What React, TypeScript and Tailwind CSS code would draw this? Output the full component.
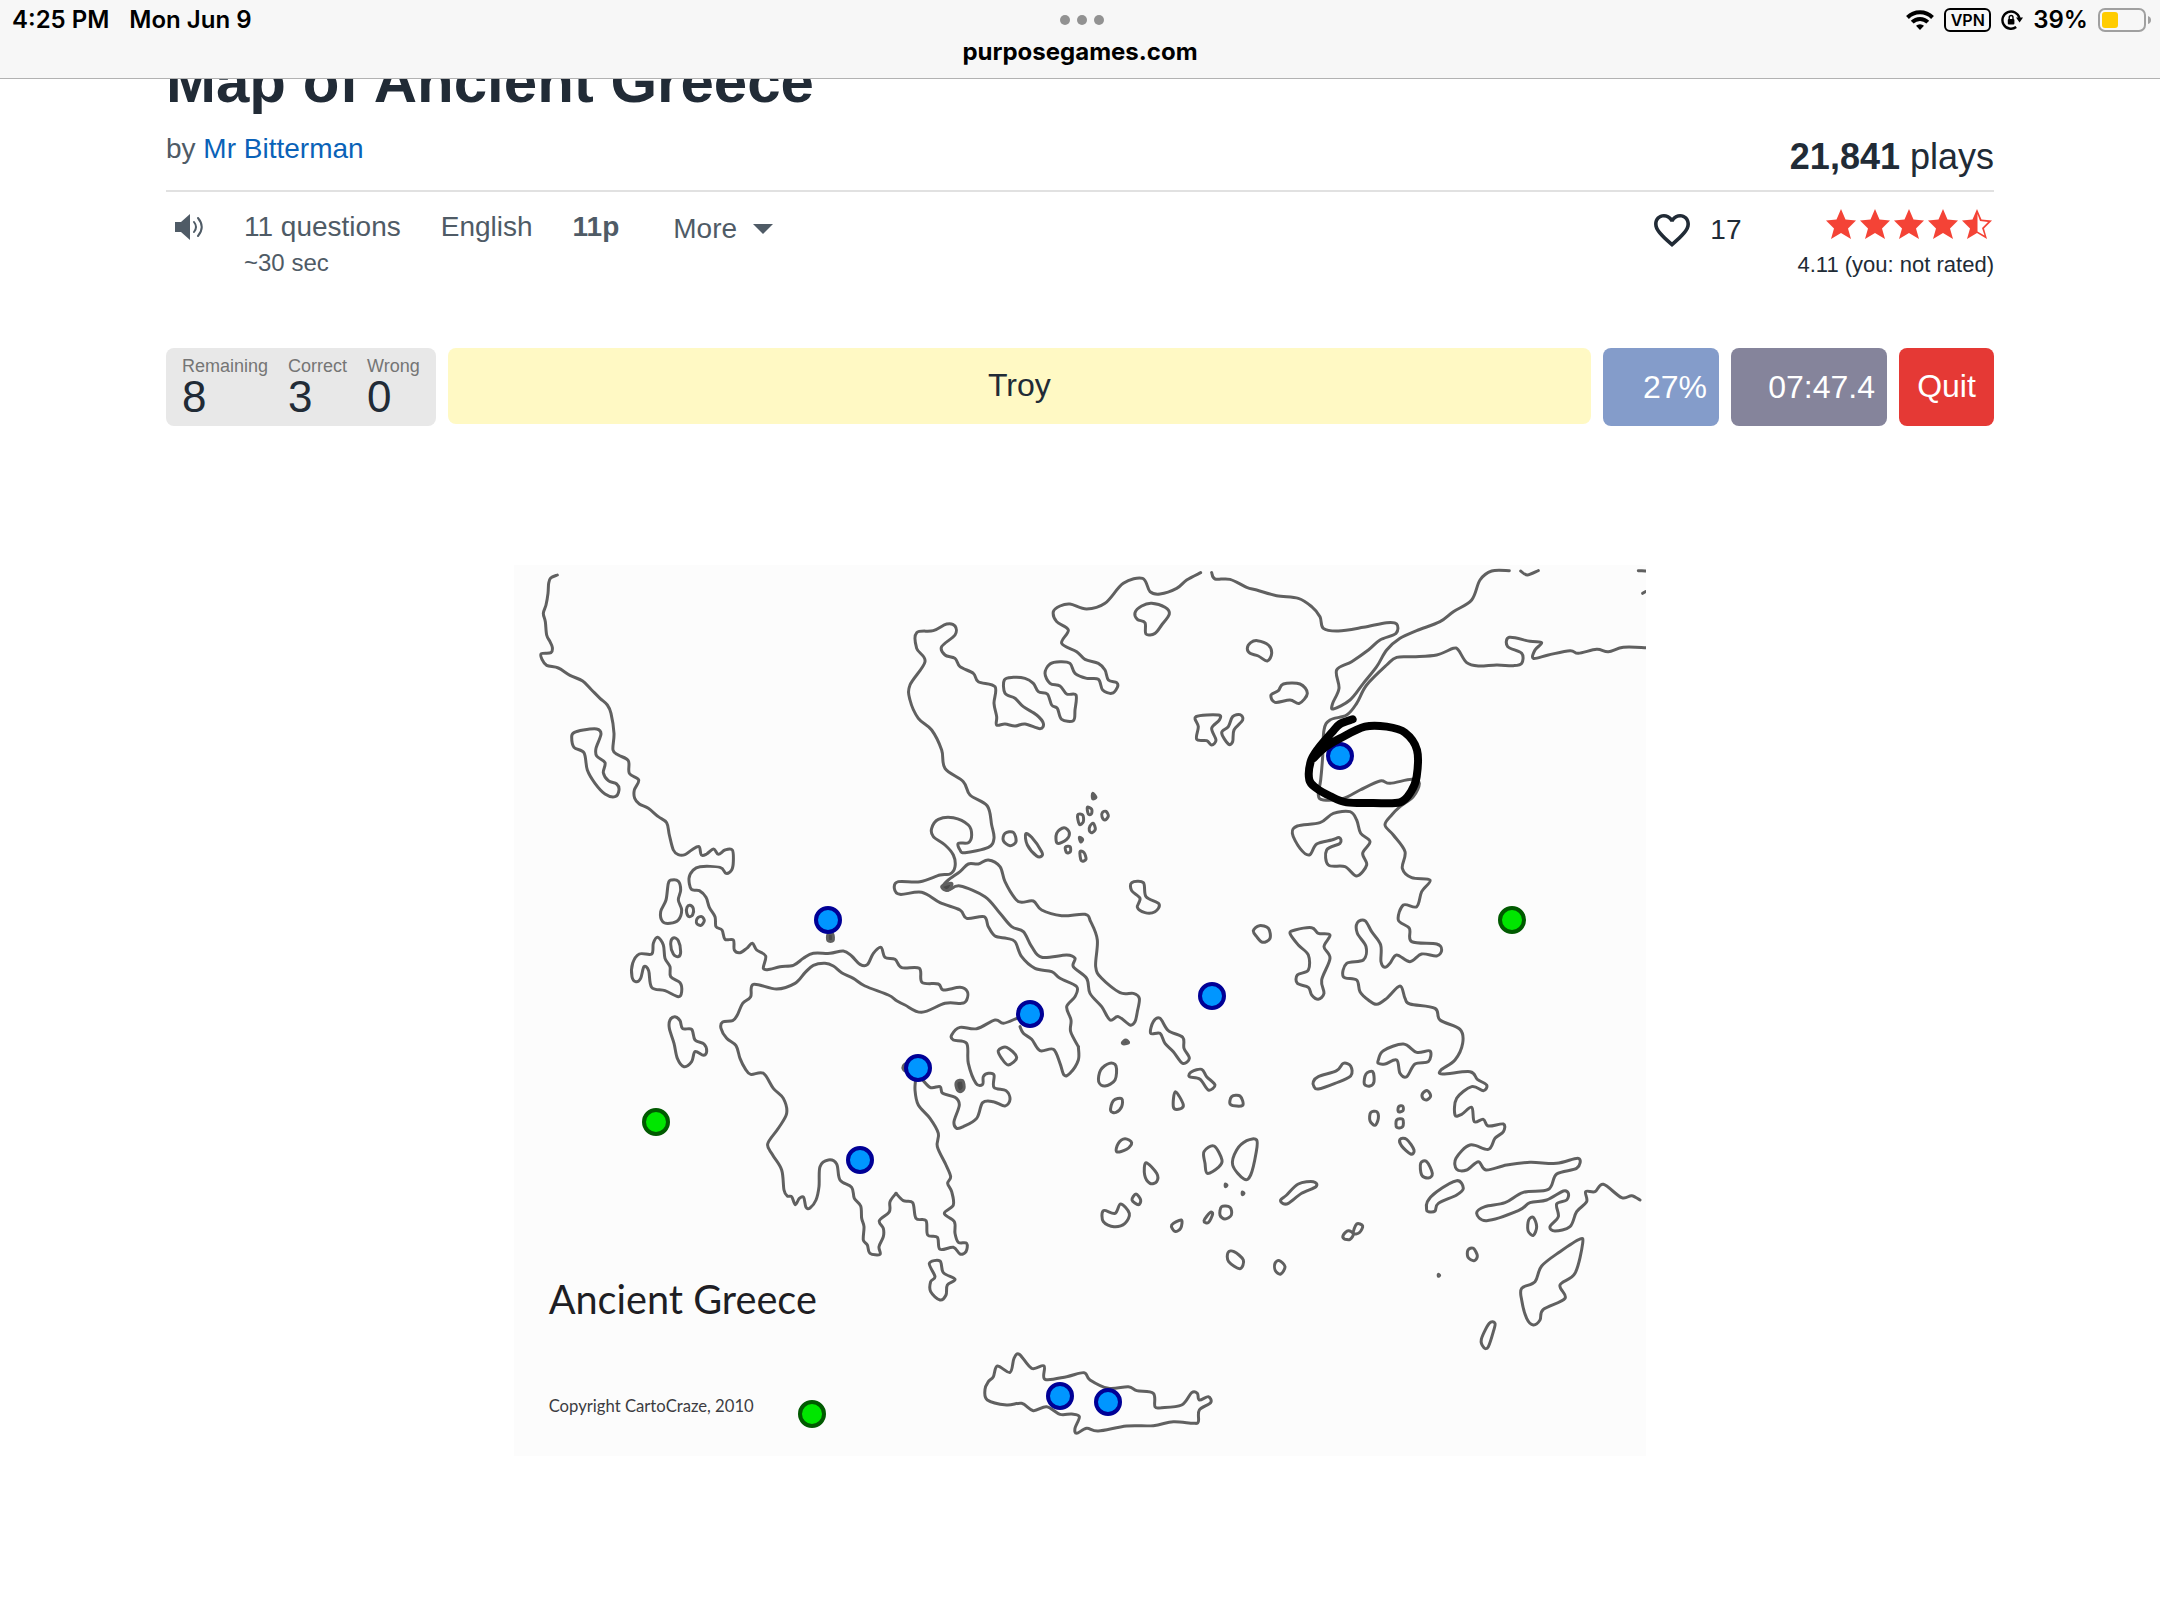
import React from 'react';

type Region = { x: number; y: number; open: string[]; closed: string[]; specks: string[] };

// Coastlines, grouped by region. Each region has its own origin on the 3396 x 2673 sheet.
const regions: Region[] = [
  {
    // Epirus and the Ionian islands
    x: -42,
    y: -45,
    open: [
      '172,75 152,84 146,100 144,130 138,165 130,190 136,215 140,255 150,275 157,292 153,308 124,311 126,328 140,346 175,354 210,376 248,393 275,420 300,445 322,465 333,490 342,550 339,600 355,615 385,632 388,670 416,690 403,720 404,745 418,762 445,775 475,800 500,818 508,855 520,900 535,914 555,914 575,900 597,890 604,915 620,912 641,897 655,913 675,900 697,900 700,935 695,960 678,970 660,952 600,950 578,962 567,985 574,1018 598,1022 618,1042 628,1072 645,1100 648,1130 666,1140 675,1168 700,1170 703,1200 720,1208 740,1195 757,1180 770,1200 797,1218 790,1255 810,1258 840,1250 880,1246 910,1225 940,1210 990,1210 1030,1203 1055,1218 1080,1243 1102,1244 1120,1210 1143,1192 1155,1222 1185,1228 1205,1253 1258,1255 1266,1297 1315,1302 1330,1320 1380,1312 1402,1325 1400,1350 1385,1360 1335,1360 1265,1387 1215,1365 1190,1352 1165,1335 1095,1308 1060,1285 1025,1268 1000,1248 975,1240 940,1246 915,1268 885,1300 830,1317 760,1303 752,1340 728,1360 712,1395 698,1412 668,1416 663,1435 680,1465 708,1487 720,1525 735,1555 752,1573 790,1570 820,1615 850,1645 860,1690 835,1735 803,1782 818,1815 845,1860 852,1920 862,1938 875,1940 886,1964 898,1945 911,1942 918,1972 930,1974 948,1950 957,1910 960,1850 985,1830 1010,1842 1020,1890 1055,1912 1063,1945 1082,1968 1085,2005 1092,2030 1090,2070 1102,2085 1110,2110 1140,2113 1137,2090 1150,2060 1150,2035 1138,2012 1168,1985 1170,1955 1188,1930',
    ],
    closed: [
      '215,560 222,548 250,540 290,537 303,552 288,595 290,618 315,638 310,668 325,692 350,702 357,720 345,740 315,732 285,700 262,660 252,608 222,592',
      '505,1000 515,990 535,994 542,1020 535,1050 545,1080 535,1110 510,1120 488,1115 482,1085 498,1050',
      '570,1066 580,1076 578,1094 567,1100 560,1088 561,1072',
      '592,1105 605,1100 613,1112 603,1126 590,1120',
      '520,1164 535,1172 542,1205 535,1220 520,1212 512,1182',
      '473,1162 490,1185 495,1225 510,1250 512,1280 540,1298 545,1325 535,1340 495,1322 455,1312 446,1262 432,1250 422,1285 408,1295 396,1280 398,1240 418,1212 455,1212 460,1180',
      '525,1400 540,1412 548,1436 575,1438 585,1470 612,1482 620,1505 610,1516 585,1505 575,1535 552,1550 532,1525 522,1480 508,1435 510,1410',
    ],
    specks: ['984,1152 998,1152 999,1172 984,1172'],
  },
  {
    // Macedonia, Thessaly and Euboea
    x: 1038,
    y: -45,
    open: [
      '655,1490 632,1445 633,1410 620,1370 645,1340 650,1310 600,1285 575,1265 525,1255 485,1220 465,1175 440,1165 405,1158 385,1130 372,1100 320,1105 300,1080 240,1058 185,1027 120,1033 103,1015 115,995 180,995 240,975 270,972 285,950 280,915 255,885 220,860 215,835 235,808 280,803 325,825 335,855 325,878 295,880 300,900 315,908 385,892 402,865 395,825 382,768 330,735 310,695 255,655 245,600 215,540 175,505 150,450 150,405 195,335 170,295 170,248 220,242 260,222 285,228 285,255 245,290 255,315 285,325 300,350 340,370 355,395 405,410 402,460 410,500 410,525 435,522 465,528 495,522 540,536 550,520 530,495 490,470 465,445 435,430 433,390 460,382 495,385 520,400 535,425 562,432 575,465 592,475 605,508 640,512 645,480 648,435 620,432 600,408 570,400 555,370 570,342 600,335 630,340 645,370 680,385 715,388 728,420 755,430 772,412 770,398 745,390 735,360 715,340 675,328 650,305 605,280 625,240 590,215 580,185 600,168 630,162 680,177 735,160 790,100 848,85 870,125 900,132 950,115 980,90 1022,68',
    ],
    closed: [
      '248,1010 265,990 300,965 325,942 355,942 385,930 420,950 435,995 465,1045 485,1057 520,1053 545,1080 605,1097 675,1093 692,1115 712,1170 707,1250 725,1285 780,1328 820,1330 838,1345 832,1385 825,1415 810,1425 775,1400 750,1410 725,1370 690,1330 680,1285 640,1250 645,1225 620,1215 545,1222 515,1190 490,1145 455,1130 420,1090 375,1040 300,1008 265,1020',
      '825,188 845,168 875,160 915,172 928,192 905,225 885,250 858,252 855,218 832,208',
      '1162,295 1172,278 1192,272 1225,285 1235,310 1222,333 1195,318 1170,310',
      '1008,500 1075,495 1078,510 1055,535 1068,570 1055,585 1040,572 1010,568 1015,530',
      '1140,494 1148,510 1122,540 1118,575 1105,582 1085,548 1105,530 1118,500',
      '435,850 460,847 468,875 450,887 430,872',
      '497,852 515,862 545,905 545,918 530,918 502,885',
      '590,850 612,833 628,848 620,868 592,880',
      '815,998 850,998 858,1040 897,1062 885,1085 855,1088 832,1072 840,1045 815,1022',
      '1180,1142 1198,1127 1225,1135 1230,1165 1208,1177 1190,1160',
      '653,795 668,795 670,815 658,823',
      '682,772 695,778 694,792 685,792',
      '727,788 738,784 745,798 735,810 726,800',
      '690,828 700,820 706,838 696,848 688,842',
      '660,905 672,908 678,928 664,932',
      '616,892 630,890 631,905 620,908',
    ],
    specks: ['698,730 708,742 698,746', '658,862 668,868 662,876', '246,1008 275,1000 268,1018 254,1020'],
  },
  {
    // Thrace, the Troad and Ionia
    x: 2178,
    y: -45,
    open: [
      '-85,68 -75,87 -30,88 20,112 50,120 110,137 175,145 215,170 240,200 250,235 295,243 370,232 440,218 470,222 468,250 420,270 385,300 335,335 290,360 297,415 278,460 280,477 330,450 370,400 410,350 440,300 480,265 530,242 600,215 640,185 695,150 720,90 755,63 808,62',
      '842,63 862,75 895,62',
      '1195,62 1216,63',
      '1208,130 1216,125',
      '1218,293 1150,292 1105,305 1070,298 1015,310 990,302 925,315 880,325 885,300 905,278 870,274 808,262 803,290 845,310 845,340 820,347 770,345 715,348 680,338 655,300 640,295 590,315 520,320 470,322 440,345 380,405 350,460 320,495 270,510 252,540 248,620 242,690 235,735 250,750 310,745 360,720 420,693 450,700 515,688 538,700 520,740 480,770 455,795 435,825 460,855 495,905 487,955 515,983 570,990 545,1025 530,1070 490,1065 475,1110 508,1135 515,1175 590,1182 605,1200 590,1218 545,1212 510,1235 470,1215 450,1240 435,1252 423,1235 422,1185 395,1145 375,1112 352,1118 352,1150 378,1190 370,1230 320,1240 310,1280 350,1290 360,1325 385,1350 410,1363 440,1345 480,1308 495,1345 510,1362 585,1375 600,1410 660,1438 668,1480 645,1530 603,1560 608,1572 690,1565 712,1588 740,1605 730,1622 695,1610 650,1645 645,1695 665,1693 695,1672 703,1715 730,1708 745,1728 790,1722 790,1745 765,1765 745,1798 690,1785 648,1825 650,1858 680,1860 715,1835 738,1860 800,1845 870,1837 950,1840 1015,1825 1010,1855 950,1872 925,1918 850,1927 795,1958 735,1970 710,1990 740,2012 835,1982 870,1958 920,1950 970,1923 985,1930 980,1950 950,1962 955,2000 930,2030 945,2043 990,2030 1010,1985 1040,1955 1037,1925 1065,1925 1090,1903 1145,1943 1175,1937 1200,1950',
    ],
    closed: [
      '93,435 115,422 130,402 180,402 202,430 178,460 150,450 105,457',
      '157,850 172,828 240,818 280,790 330,785 350,810 362,850 390,875 368,910 380,945 350,978 315,950 265,945 260,900 300,880 298,863 275,870 230,882 208,915 180,895',
      '150,1150 165,1140 215,1133 235,1150 270,1155 252,1190 270,1225 245,1290 252,1330 235,1348 215,1335 205,1312 172,1300 172,1275 205,1260 205,1215 175,1185',
    ],
    specks: [],
  },
  {
    // Argolis, Attica, the Cyclades and Crete
    x: 1038,
    y: 1245,
    open: [
      '108,640 130,662 158,668 168,715 198,722 203,765 232,772 240,808 280,802 300,822 318,815 320,790 295,787 285,760 283,725 253,700 280,675 275,635 263,610 272,590 258,555 232,500 235,460 210,415 175,375 165,330 168,290',
      '180,290 210,322 240,320 248,340 285,352 298,375 282,425 290,445 310,440 350,415 368,368 400,365 435,378 450,358 438,332 402,322 402,285 385,280 370,290 368,313 348,310 325,250 320,190 280,180 275,165 300,142 350,146 405,120 430,130 470,115',
      '480,140 490,160 515,178 540,212 580,208 600,250 612,285 630,280 655,240 655,200',
    ],
    closed: [
      '375,1228 385,1205 400,1190 412,1158 450,1177 462,1135 478,1123 515,1165 552,1158 555,1198 620,1190 672,1178 690,1200 745,1225 805,1220 830,1232 880,1240 885,1280 905,1283 965,1275 995,1238 1012,1240 1018,1260 1045,1250 1052,1268 1018,1290 1015,1325 1000,1330 940,1325 880,1337 800,1338 715,1353 680,1345 650,1360 645,1345 658,1310 635,1302 600,1303 560,1280 520,1292 485,1270 440,1275 382,1260',
      '415,212 440,202 470,232 445,255 425,235',
      '208,850 240,843 250,878 285,898 262,915 258,945 240,960 212,935 212,905 225,890',
      '722,270 748,250 768,258 765,300 735,318 716,305',
      '760,362 785,356 785,380 768,397 752,392',
      '872,160 880,125 900,115 925,152 968,172 972,205 988,235 968,250 940,215 915,190 900,160',
      '988,290 995,275 1025,268 1040,290 1065,315 1045,330 1020,298',
      '946,335 970,375 955,388 940,380',
      '1115,350 1140,348 1148,376 1112,374',
      '775,490 795,476 815,488 800,508 770,515',
      '858,548 890,580 890,605 870,610 854,585',
      '828,642 842,660 835,674 816,660',
      '730,692 765,700 782,672 808,700 795,730 762,740 730,725',
      '935,735 964,720 962,745 945,754',
      '1032,515 1062,498 1086,540 1075,562 1042,580 1035,550',
      '1190,480 1188,520 1172,585 1152,597 1118,555 1130,510 1160,482',
      '1032,722 1050,698 1058,702 1045,728',
      '1085,680 1110,682 1114,705 1095,717 1080,705',
      '1104,818 1122,815 1150,840 1140,866 1106,845',
    ],
    specks: [
      '290,305 308,302 312,325 300,335 290,325',
      '787,188 797,180 806,188 792,192',
      '130,258 138,252 138,272 130,268',
      '1096,612 1101,616 1096,620',
      '1147,636 1152,640 1147,644',
    ],
  },
  {
    // The Dodecanese
    x: 2178,
    y: 1245,
    open: [],
    closed: [
      '220,305 235,290 290,272 310,250 332,258 332,288 285,310 235,327 222,320',
      '378,282 398,275 402,305 390,318 373,312',
      '415,240 430,212 490,192 530,217 570,213 565,245 525,252 500,290 480,280 470,240 435,252 415,250',
      '392,398 410,395 415,415 405,436 390,422',
      '548,340 562,332 572,348 560,360 548,354',
      '476,380 488,378 489,392 475,395',
      '470,420 488,418 488,440 470,442',
      '480,478 500,478 522,510 512,522 485,498',
      '542,550 560,545 577,580 565,594 545,585',
      '560,690 562,665 590,635 650,602 670,625 650,645 595,670 585,693 565,695',
      '122,660 140,645 175,612 220,605 228,620 185,640 145,670 128,670',
      '310,765 325,752 340,762 330,778 312,776',
      '340,760 350,732 368,738 358,758',
      '105,850 118,842 135,860 122,882 106,872',
      '866,720 880,712 890,740 880,766 864,752',
      '684,810 700,805 712,828 702,842 684,832',
      '1018,778 1028,790 1005,880 960,915 975,955 910,988 900,1020 880,1035 860,1015 845,960 845,925 885,905 905,858 960,815',
      '748,1030 765,1030 760,1055 745,1100 732,1103 724,1078',
    ],
    specks: ['595,883 599,886 595,889'],
  },
];

const markers = [
  { name: 'Marker 1', x: 828, y: 920, solved: false },
  { name: 'Marker 2', x: 1030, y: 1014, solved: false },
  { name: 'Marker 3', x: 1212, y: 996, solved: false },
  { name: 'Marker 4', x: 918, y: 1068, solved: false },
  { name: 'Marker 5', x: 860, y: 1160, solved: false },
  { name: 'Marker 6', x: 1340, y: 756, solved: false },
  { name: 'Marker 7', x: 1060, y: 1396, solved: false },
  { name: 'Marker 8', x: 1108, y: 1402, solved: false },
  { name: 'Marker 9', x: 1512, y: 920, solved: true },
  { name: 'Marker 10', x: 656, y: 1122, solved: true },
  { name: 'Marker 11', x: 812, y: 1414, solved: true },
];

const stats = [
  { label: 'Remaining', value: 8 },
  { label: 'Correct', value: 3 },
  { label: 'Wrong', value: 0 },
];

// Turns "x,y x,y ..." into a rounded curve through every point
function curve(list: string, closed = false) {
  const p = list.split(' ').map((s) => s.split(',').map(Number));
  const n = p.length;
  const at = (i: number) => (closed ? p[(i + n) % n] : p[Math.max(0, Math.min(n - 1, i))]);
  let d = `M${p[0][0]},${p[0][1]}`;
  for (let i = 0; i < (closed ? n : n - 1); i++) {
    const [a, b, c, e] = [at(i - 1), at(i), at(i + 1), at(i + 2)];
    d += `C${b[0] + (c[0] - a[0]) / 6},${b[1] + (c[1] - a[1]) / 6} ${c[0] - (e[0] - b[0]) / 6},${c[1] - (e[1] - b[1]) / 6} ${c[0]},${c[1]}`;
  }
  return closed ? d + 'Z' : d;
}

function StatusBar() {
  return (
    <header className="relative z-10 h-[79px] border-b border-[#b2b2b2] bg-[#f7f7f7] font-['Inter',sans-serif] text-2xl font-semibold text-black">
      <div className="grid grid-cols-3 pl-3 pr-2 pt-1 leading-8">
        <div className="flex gap-5">
          <span>4:25 PM</span>
          <span>Mon Jun 9</span>
        </div>
        <div className="flex items-center justify-center gap-[7px]">
          <span className="size-2.5 rounded-full bg-[#929292]" />
          <span className="size-2.5 rounded-full bg-[#929292]" />
          <span className="size-2.5 rounded-full bg-[#929292]" />
        </div>
        <div className="flex items-center justify-end gap-2.5">
          <svg width="28" height="20" viewBox="0 0 28 20" fill="none" stroke="#000" strokeWidth="4">
            <path d="M1.5 7.5a17.7 17.7 0 0 1 25 0" />
            <path d="M6.2 12.2a11 11 0 0 1 15.6 0" />
            <path d="M14 20l-4-4.2a5.8 5.8 0 0 1 8 0z" fill="#000" stroke="none" />
          </svg>
          <span className="flex h-6 w-[47px] items-center justify-center rounded-md border-2 border-black text-base">VPN</span>
          <svg width="22" height="20" viewBox="0 0 22 20" fill="none" stroke="#000">
            <path d="M15.2 17A8.6 8.6 0 1 1 18.4 8" strokeWidth="2.4" />
            <path d="M15 7.6h7l-3.4 5z" fill="#000" stroke="none" />
            <rect x="6.8" y="9" width="6.6" height="5.4" rx="1" fill="#000" stroke="none" />
            <path d="M8.2 9V7.4a1.9 1.9 0 0 1 3.8 0V9" strokeWidth="1.4" />
          </svg>
          <span>39%</span>
          <svg width="54" height="24" viewBox="0 0 54 24">
            <rect x="1" y="1" width="46" height="22" rx="6" fill="none" stroke="#a0a0a0" strokeWidth="2" />
            <rect x="4" y="4" width="16" height="16" rx="3" fill="#ffcc00" />
            <path d="M50 8q3 1 3 4t-3 4z" fill="#a0a0a0" />
          </svg>
        </div>
      </div>
      <p className="text-center font-bold leading-8">purposegames.com</p>
    </header>
  );
}

function Stars() {
  const star = 'M15 0l4.5 10.5L30 11.5l-8 8L25 30l-10-6-10 6 3-10.5-8-8 10.5-1z';
  return (
    <svg role="img" aria-label="4.11 out of 5" width="168" height="30" viewBox="0 0 168 30" fill="#f44336">
      {[0, 34, 68, 102].map((x) => (
        <path key={x} d={star} transform={`translate(${x} 0)`} />
      ))}
      <path
        transform="translate(136 0)"
        fillRule="evenodd"
        d="M15 0l4.5 10.5L30 11.5l-8 8L25 30l-10-6-10 6 3-10.5-8-8 10.5-1zM15.5 5v17.5l7 4-2.5-7.5 6-6-8-.9z"
      />
    </svg>
  );
}

function GameHeader() {
  return (
    <>
      <h1 className="-mt-7 text-[60px] font-bold leading-[62px]">Map of Ancient Greece</h1>
      <div className="flex items-start justify-between border-b-2 border-[#e1e1e1] pb-[13px] pt-4">
        <p className="text-[28px] leading-10 text-[#4f5b66]">
          by <a href="#author" className="text-[#0a62b8]">Mr Bitterman</a>
        </p>
        <p className="pt-2 text-4xl leading-10">
          <b>21,841</b> plays
        </p>
      </div>

      <div className="flex items-start justify-between pt-[17px]">
        <div className="flex items-start gap-10 text-[28px] leading-9 text-[#4f5b66]">
          <button type="button" aria-label="Toggle sound" className="flex h-9 items-center pl-2">
            <svg width="30" height="26" viewBox="0 0 30 26">
              <path d="M1 8h6l9-8v26l-9-8H1z" fill="#4f5b66" />
              <path d="M20 8q4 5 0 10M24 4q7.5 9 0 18" fill="none" stroke="#4f5b66" strokeWidth="2" strokeLinecap="round" />
            </svg>
          </button>
          <p>
            11 questions
            <span className="block text-2xl leading-9">~30 sec</span>
          </p>
          <span>English</span>
          <b>11p</b>
          <button type="button" className="ml-3.5 flex items-center gap-4 pt-0.5">
            More
            <svg width="20" height="10" viewBox="0 0 20 10" fill="#4f5b66">
              <path d="M0 0h20L10 10z" />
            </svg>
          </button>
        </div>

        <div className="flex items-start gap-14">
          <button type="button" aria-label="Like" className="flex items-center gap-5 pt-[3px] text-[28px] leading-9">
            <svg width="36" height="33" viewBox="2 3 20 18.35" fill="#212b36">
              <path d="M16.5 3c-1.74 0-3.41.81-4.5 2.09C10.91 3.81 9.24 3 7.5 3 4.42 3 2 5.42 2 8.5c0 3.78 3.4 6.86 8.55 11.54L12 21.35l1.45-1.32C18.6 15.36 22 12.28 22 8.5 22 5.42 19.58 3 16.5 3zm-4.4 15.55l-.1.1-.1-.1C7.14 14.24 4 11.39 4 8.5 4 6.5 5.5 5 7.5 5c1.54 0 3.04.99 3.57 2.36h1.87C13.46 5.99 14.96 5 16.5 5c2 0 3.5 1.5 3.5 3.5 0 2.89-3.14 5.74-7.9 10.05z" />
            </svg>
            17
          </button>
          <div className="flex flex-col items-end gap-2.5">
            <Stars />
            <p className="text-[22px] leading-8">4.11 (you: not rated)</p>
          </div>
        </div>
      </div>
    </>
  );
}

function ScoreBar() {
  return (
    <div className="mt-[67px] flex gap-3 text-[32px]">
      <dl className="flex h-[78px] gap-5 rounded-lg bg-[#e8e8e8] px-4 pt-1.5">
        {stats.map((s) => (
          <div key={s.label}>
            <dt className="text-lg leading-6 text-[#757575]">{s.label}</dt>
            <dd className="text-[44px] leading-[38px]">{s.value}</dd>
          </div>
        ))}
      </dl>
      <div className="flex h-[76px] flex-1 items-center justify-center rounded-lg bg-[#fff9c4] pb-0.5">Troy</div>
      <div className="flex w-[116px] items-center justify-end rounded-lg bg-[#849cca] pr-3 text-white">27%</div>
      <div className="flex w-[156px] items-center justify-end rounded-lg bg-[#85849b] pr-3 text-white">07:47.4</div>
      <button type="button" className="w-[95px] rounded-lg bg-[#e53935] pb-0.5 text-center text-white">
        Quit
      </button>
    </div>
  );
}

function GreeceMap() {
  return (
    <section aria-label="Ancient Greece" className="relative mx-auto mt-[139px] w-full max-w-[1132px]">
      <svg className="block w-full bg-[#fcfcfc]" viewBox="0 0 3396 2673">
        {regions.map((r, i) => (
          <g
            key={i}
            transform={`translate(${r.x} ${r.y})`}
            fill="none"
            stroke="#606060"
            strokeWidth="9"
            strokeLinecap="round"
            strokeLinejoin="round"
          >
            {r.open.map((p) => (
              <path key={p} d={curve(p)} />
            ))}
            {r.closed.map((p) => (
              <path key={p} d={curve(p, true)} />
            ))}
            {r.specks.map((p) => (
              <path key={p} d={curve(p, true)} fill="#4a4a4a" />
            ))}
          </g>
        ))}
        <g fill="#1e1e24" fontFamily="Lato, sans-serif">
          <text x="104" y="2247" fontSize="119">
            Ancient Greece
          </text>
          <text x="104" y="2540" fontSize="50" fill="#3c3c42">
            Copyright CartoCraze, 2010
          </text>
        </g>
      </svg>

      {markers.map((m) => (
        <button
          key={m.name}
          type="button"
          aria-label={m.name}
          className={
            m.solved
              ? 'absolute size-7 -translate-x-1/2 -translate-y-1/2 rounded-full border-4 border-[#005a00] bg-[#00e600]'
              : 'absolute size-7 -translate-x-1/2 -translate-y-1/2 rounded-full border-4 border-[#000096] bg-[#0096ff]'
          }
          style={{ left: `${((m.x - 514) / 1132) * 100}%`, top: `${((m.y - 565) / 891) * 100}%` }}
        />
      ))}

      {/* pen stroke drawn over the map */}
      <svg className="pointer-events-none absolute inset-0 size-full" viewBox="0 0 3396 2673">
        <path
          transform="translate(2178 -45)"
          d={curve('338,508 300,522 275,548 235,595 212,635 208,690 230,715 270,738 320,757 400,759 480,757 513,725 530,680 531,600 495,548 440,530 375,530 300,565 255,592 220,625')}
          fill="none"
          stroke="#000"
          strokeWidth="24"
          strokeLinecap="round"
          strokeLinejoin="round"
        />
      </svg>
    </section>
  );
}

export default function App() {
  return (
    <div className="min-h-screen bg-white font-['Liberation_Sans',Arial,sans-serif] text-[#212b36]">
      <StatusBar />
      <main className="mx-auto max-w-[1828px]">
        <GameHeader />
        <ScoreBar />
        <GreeceMap />
      </main>
    </div>
  );
}
